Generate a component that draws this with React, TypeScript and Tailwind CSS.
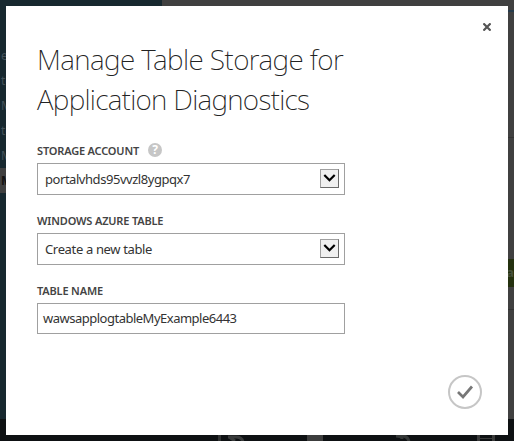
import React from "react";

const label = "flex h-4 items-center gap-[9px] text-[11px] font-semibold leading-4 tracking-[-0.17px] text-[#444]";

function Select({ value, tracking }: { value: string; tracking: string }) {
  return (
    <div className="flex h-8 w-[308px] items-center justify-between border border-[#a0a0a0] bg-white pl-[7px] pr-[5px]">
      <span className={`whitespace-nowrap text-[13px] leading-[18px] text-[#333] ${tracking}`}>{value}</span>
      <span className="-mt-px flex h-[19px] w-[19px] items-center justify-center border border-b-[#696969] border-l-[#a0a0a0] border-r-[#696969] border-t-[#a0a0a0] bg-[#f0f0f0]">
        <svg width="17" height="17" viewBox="0 0 17 17" fill="none" stroke="#000" strokeWidth="2.2">
          <path d="M3.3 5L8.5 10.2L13.7 5" />
        </svg>
      </span>
    </div>
  );
}

function Backdrop() {
  return (
    <div className="flex h-full flex-col overflow-hidden bg-[#404040]">
      <div className="flex h-[419px]">
        <div className="h-full w-[162px] bg-[#17282f] pt-[43px] text-[12px] leading-[25px] text-[#44525a]">
          {["e", "to", "M", "to", "M"].map((t, i) => (
            <div key={i} className="pl-px">{t}</div>
          ))}
          <div className="bg-[#404040] pl-px font-bold text-[#111]">M</div>
        </div>
        <div className="flex-1 pt-[10px]">
          <div className="h-[2px] bg-[#263b4b]" />
          <div className="mt-[125px] h-px bg-[#333]" />
          <div className="mt-[121px] flex h-7 items-center justify-end bg-[#24310f] text-[13px] font-bold text-[#47503a]">a</div>
          <div className="mt-[22px] h-px bg-[#333]" />
        </div>
      </div>
      <div className="flex h-[22px] items-end bg-[#0e1113] pl-[218px]">
        <div className="h-[6px] w-[3px] bg-[#303232]" />
        <svg className="ml-[5px]" width="19" height="6" fill="none" stroke="#393b3b" strokeWidth="3">
          <path d="M2 2H10Q16 2 17 7M3 2L9 6" />
        </svg>
        <div className="ml-[62px] h-[6px] w-4 bg-[#3c3d3d]" />
        <svg className="ml-[71px]" width="17" height="6" fill="none" stroke="#343737" strokeWidth="3">
          <path d="M2 1Q8 1 8 4M6 1Q14 0 15 7" />
        </svg>
        <div className="ml-[66px] flex h-[6px] w-[18px] items-end border-x-[3px] border-[#393a3a]">
          <div className="mb-[2px] h-px w-full bg-[#393a3a]" />
        </div>
      </div>
    </div>
  );
}

export default function App() {
  return (
    <div className="relative h-[441px] w-[514px] overflow-hidden font-['Noto_Sans','Open_Sans',sans-serif]">
      <Backdrop />
      <div className="absolute left-[6px] top-[6px] flex h-[429px] w-[502px] flex-col bg-white pl-[31px] pt-[33px]">
        <button aria-label="Close" className="absolute right-[17px] top-[17px]">
          <svg width="8" height="8" viewBox="0 0 8 8" stroke="#555" strokeWidth="2.2">
            <path d="M0.4 0.4L7.6 7.6M7.6 0.4L0.4 7.6" />
          </svg>
        </button>
        <h1 className="whitespace-nowrap text-[28px] font-extralight leading-10 text-[#222]">
          <span className="block tracking-[-0.57px]">Manage Table Storage for</span>
          <span className="block tracking-[-0.7px]">Application Diagnostics</span>
        </h1>
        <div className="mt-6">
          <div className={label}>
            <span>STORAGE ACCOUNT</span>
            <span className="-mt-[3px] flex h-[14px] w-[14px] items-center justify-center rounded-full bg-[#c6c6c6] text-[12px] font-bold leading-none text-white">?</span>
          </div>
          <div className="mt-1">
            <Select value="portalvhds95vvzl8ygpqx7" tracking="tracking-[-0.45px]" />
          </div>
        </div>
        <div className="mt-[18px]">
          <div className={label}>WINDOWS AZURE TABLE</div>
          <div className="mt-1">
            <Select value="Create a new table" tracking="tracking-[-0.35px]" />
          </div>
        </div>
        <div className="mt-[18px]">
          <div className={label}>TABLE NAME</div>
          <div className="mt-1 flex h-[31px] w-[308px] items-center border border-[#a0a0a0] pl-[5px] text-[13px] tracking-[-0.5px] text-[#333]">
            wawsapplogtableMyExample6443
          </div>
        </div>
        <button aria-label="Complete" className="absolute bottom-[26px] right-[26px]">
          <svg width="34" height="34" viewBox="0 0 34 34" fill="none">
            <circle cx="17" cy="17" r="16" stroke="#c6c6c6" strokeWidth="2" />
            <path d="M10 17L15 22L24 11.5" stroke="#777" strokeWidth="2.7" />
          </svg>
        </button>
      </div>
    </div>
  );
}
